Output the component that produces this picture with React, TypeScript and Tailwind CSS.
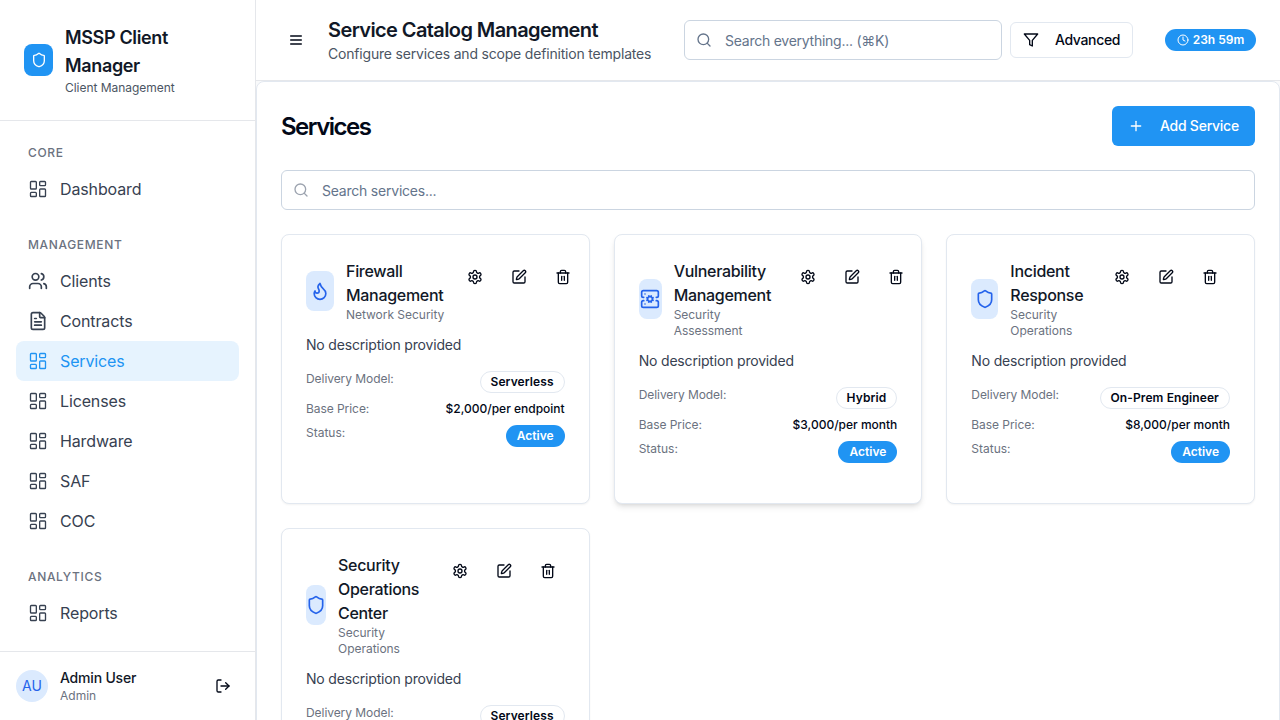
import React from "react";
import {
  Clock, FileText, Flame, LayoutDashboard, LogOut, Plus, Search,
  ServerCog, Shield, SquarePen, Trash2,
} from "lucide-react";

type IconProps = { size?: number; className?: string };
type IconType = React.ComponentType<IconProps>;

function Stroke({ size = 16, className, children }: IconProps & { children: React.ReactNode }) {
  return (
    <svg
      width={size}
      height={size}
      viewBox="0 0 24 24"
      fill="none"
      stroke="currentColor"
      strokeWidth={2}
      strokeLinecap="round"
      strokeLinejoin="round"
      className={className}
    >
      {children}
    </svg>
  );
}

function MenuIcon(props: IconProps) {
  return (
    <Stroke {...props}>
      <path d="M4 6h16M4 12h16M4 18h16" />
    </Stroke>
  );
}

function FilterIcon(props: IconProps) {
  return (
    <Stroke {...props}>
      <polygon points="22 3 2 3 10 12.46 10 19 14 21 14 12.46 22 3" />
    </Stroke>
  );
}

function DashboardIcon({ size = 20, className }: IconProps) {
  return <LayoutDashboard size={size} strokeWidth={1.6} className={className} />;
}

function UsersIcon(props: IconProps) {
  return (
    <Stroke {...props}>
      <path d="M16 21v-2a4 4 0 0 0-4-4H6a4 4 0 0 0-4 4v2" />
      <circle cx="9" cy="7" r="4" />
      <path d="M22 21v-2a4 4 0 0 0-3-3.87" />
      <path d="M16 3.13a4 4 0 0 1 0 7.75" />
    </Stroke>
  );
}

function SettingsIcon(props: IconProps) {
  return (
    <Stroke {...props}>
      <path d="M12.22 2h-.44a2 2 0 0 0-2 2v.18a2 2 0 0 1-1 1.73l-.43.25a2 2 0 0 1-2 0l-.15-.08a2 2 0 0 0-2.73.73l-.22.38a2 2 0 0 0 .73 2.73l.15.1a2 2 0 0 1 1 1.72v.51a2 2 0 0 1-1 1.74l-.15.09a2 2 0 0 0-.73 2.73l.22.38a2 2 0 0 0 2.73.73l.15-.08a2 2 0 0 1 2 0l.43.25a2 2 0 0 1 1 1.73V20a2 2 0 0 0 2 2h.44a2 2 0 0 0 2-2v-.18a2 2 0 0 1 1-1.73l.43-.25a2 2 0 0 1 2 0l.15.08a2 2 0 0 0 2.73-.73l.22-.39a2 2 0 0 0-.73-2.73l-.15-.08a2 2 0 0 1-1-1.74v-.5a2 2 0 0 1 1-1.74l.15-.09a2 2 0 0 0 .73-2.73l-.22-.38a2 2 0 0 0-2.73-.73l-.15.08a2 2 0 0 1-2 0l-.43-.25a2 2 0 0 1-1-1.73V4a2 2 0 0 0-2-2z" />
      <circle cx="12" cy="12" r="3" />
    </Stroke>
  );
}

type NavItem = { label: string; icon: IconType; active?: boolean };
type NavGroup = { title: string; items: NavItem[] };

const groups: NavGroup[] = [
  { title: "CORE", items: [{ label: "Dashboard", icon: DashboardIcon }] },
  {
    title: "MANAGEMENT",
    items: [
      { label: "Clients", icon: UsersIcon },
      { label: "Contracts", icon: FileText },
      { label: "Services", icon: DashboardIcon, active: true },
      { label: "Licenses", icon: DashboardIcon },
      { label: "Hardware", icon: DashboardIcon },
      { label: "SAF", icon: DashboardIcon },
      { label: "COC", icon: DashboardIcon },
    ],
  },
  { title: "ANALYTICS", items: [{ label: "Reports", icon: DashboardIcon }] },
];

type Service = {
  name: string;
  category: string;
  icon: IconType;
  model: string;
  price: string;
  headWidth: string;
  tileWidth: string;
  raised?: boolean;
};

const services: Service[] = [
  { name: "Firewall Management", category: "Network Security", icon: Flame, model: "Serverless", price: "$2,000/per endpoint", headWidth: "w-[149px]", tileWidth: "w-7" },
  { name: "Vulnerability Management", category: "Security Assessment", icon: ServerCog, model: "Hybrid", price: "$3,000/per month", headWidth: "w-[149px]", tileWidth: "w-[23px]", raised: true },
  { name: "Incident Response", category: "Security Operations", icon: Shield, model: "On-Prem Engineer", price: "$8,000/per month", headWidth: "w-[131px]", tileWidth: "w-[27px]" },
  { name: "Security Operations Center", category: "Security Operations", icon: Shield, model: "Serverless", price: "$15,000/per month", headWidth: "w-[134px]", tileWidth: "w-5" },
];

function Sidebar() {
  return (
    <aside className="flex h-full w-64 shrink-0 flex-col border-r border-gray-200 bg-white">
      <div className="flex h-[121px] shrink-0 items-center gap-3 border-b border-gray-200 px-6">
        <div className="flex h-8 w-[29px] shrink-0 items-center justify-center rounded-lg bg-[#2094f3] text-white">
          <Shield size={16} />
        </div>
        <div>
          <h1 className="text-lg leading-7 font-semibold tracking-[-0.35px] text-[#111827]">MSSP Client Manager</h1>
          <p className="text-xs tracking-[-0.03px] text-[#4b5563]">Client Management</p>
        </div>
      </div>
      <nav className="flex min-h-0 flex-1 flex-col gap-7 overflow-hidden px-4 pt-6">
        {groups.map((group) => (
          <div key={group.title}>
            <h3 className="mb-2 px-3 text-xs font-medium tracking-[0.65px] text-[#6b7280]">{group.title}</h3>
            {group.items.map(({ label, icon: Icon, active }) => (
              <a
                key={label}
                className={
                  active
                    ? "flex h-10 items-center gap-3 rounded-lg bg-[#e6f3fe] px-3 text-[#2094f3]"
                    : "flex h-10 items-center gap-3 rounded-lg px-3 text-[#374151]"
                }
              >
                <Icon size={20} />
                <span className="tracking-[-0.13px]">{label}</span>
              </a>
            ))}
          </div>
        ))}
      </nav>
      <div className="flex h-[69px] shrink-0 items-center gap-3 border-t border-gray-200 px-4">
        <div className="flex h-8 w-8 items-center justify-center rounded-full bg-[#dbeafe] text-sm text-[#2563eb]">AU</div>
        <div className="flex-1">
          <p className="text-sm font-medium tracking-[-0.2px] text-[#111827]">Admin User</p>
          <p className="text-xs text-[#6b7280]">Admin</p>
        </div>
        <button className="flex h-9 w-8 items-center justify-center text-[#020817]">
          <LogOut size={16} />
        </button>
      </div>
    </aside>
  );
}

function Header() {
  return (
    <header className="flex h-[81px] shrink-0 items-center border-b border-gray-200 bg-white pr-6 pl-8">
      <MenuIcon size={16} className="shrink-0 text-[#020817]" />
      <div className="ml-6 w-[324px] shrink-0">
        <h2 className="text-xl leading-7 font-semibold tracking-[-0.6px] text-[#111827]">Service Catalog Management</h2>
        <p className="text-sm tracking-[-0.19px] whitespace-nowrap text-[#4b5563]">Configure services and scope definition templates</p>
      </div>
      <div className="ml-8 flex h-10 w-[318px] items-center gap-[13px] rounded-md border border-[#cbd5e1] px-[11px] text-[#64748b]">
        <Search size={16} />
        <span className="pt-0.5 text-sm tracking-[-0.25px]">Search everything... (⌘K)</span>
      </div>
      <button className="ml-2 flex h-9 w-[123px] items-center gap-4 rounded-md border border-[#e2e8f0] pl-3 text-sm font-medium tracking-[-0.35px] text-[#020817]">
        <FilterIcon size={16} />
        Advanced
      </button>
      <div className="ml-auto flex h-[22px] w-[91px] items-center justify-center gap-1 rounded-full bg-[#2094f3] text-xs font-semibold text-white">
        <Clock size={12} />
        23h 59m
      </div>
    </header>
  );
}

function ServiceCard({ service }: { service: Service }) {
  const Icon = service.icon;
  return (
    <article
      className={
        service.raised
          ? "flex h-[270px] flex-col rounded-lg border border-[#e2e8f0] bg-white p-6 shadow-md"
          : "flex h-[270px] flex-col rounded-lg border border-[#e2e8f0] bg-white p-6 shadow-xs"
      }
    >
      <div className="flex items-start">
        <div className={`flex shrink-0 items-center gap-3 ${service.headWidth}`}>
          <div className={`flex h-10 shrink-0 items-center justify-center rounded-lg bg-[#dbeafe] text-[#2563eb] ${service.tileWidth}`}>
            <Icon size={20} className="shrink-0" />
          </div>
          <div>
            <h3 className="font-medium tracking-[-0.3px] text-[#111827]">{service.name}</h3>
            <p className="text-xs tracking-[-0.03px] text-[#6b7280]">{service.category}</p>
          </div>
        </div>
        <div className="flex shrink-0 gap-1 text-[#020817]">
          <button className="flex h-9 items-center px-3"><SettingsIcon size={16} /></button>
          <button className="flex h-9 items-center px-3"><SquarePen size={16} /></button>
          <button className="flex h-9 items-center px-3"><Trash2 size={16} /></button>
        </div>
      </div>
      <p className="mt-3 text-sm tracking-[-0.18px] text-[#374151]">No description provided</p>
      <dl className="mt-4 space-y-2 text-xs">
        <div className="flex justify-between">
          <dt className="tracking-[-0.06px] text-[#6b7280]">Delivery Model:</dt>
          <dd className="rounded-full border border-[#e2e8f0] px-2.5 py-0.5 font-semibold tracking-[0.1px] text-[#020817]">{service.model}</dd>
        </div>
        <div className="flex justify-between">
          <dt className="tracking-[-0.06px] text-[#6b7280]">Base Price:</dt>
          <dd className="font-medium text-[#020817]">{service.price}</dd>
        </div>
        <div className="flex justify-between">
          <dt className="text-[#6b7280]">Status:</dt>
          <dd className="rounded-full border border-transparent bg-[#2094f3] px-2.5 py-0.5 font-semibold text-white">Active</dd>
        </div>
      </dl>
    </article>
  );
}

export default function App() {
  return (
    <div className="flex h-screen w-full overflow-hidden bg-gray-50 font-['Inter',sans-serif]">
      <Sidebar />
      <div className="flex min-w-0 flex-1 flex-col">
        <Header />
        <main className="min-h-0 flex-1 overflow-hidden">
          <section className="h-[900px] rounded-lg border border-[#e2e8f0] bg-white p-6">
            <div className="flex h-10 items-center justify-between">
              <h2 className="pt-0.5 text-2xl font-semibold tracking-[-1.5px] text-[#020817]">Services</h2>
              <button className="flex h-10 w-[143px] items-center gap-4 rounded-md bg-[#2094f3] px-4 text-sm font-medium tracking-[-0.25px] whitespace-nowrap text-white">
                <Plus size={16} />
                Add Service
              </button>
            </div>
            <div className="mt-6 flex h-10 items-center gap-[13px] rounded-md border border-[#cbd5e1] px-[11px]">
              <Search size={16} className="text-[#9ca3af]" />
              <span className="pt-0.5 text-sm tracking-[-0.22px] text-[#64748b]">Search services...</span>
            </div>
            <div className="mt-6 grid grid-cols-3 gap-6">
              {services.map((service) => (
                <ServiceCard key={service.name} service={service} />
              ))}
            </div>
          </section>
        </main>
      </div>
    </div>
  );
}
